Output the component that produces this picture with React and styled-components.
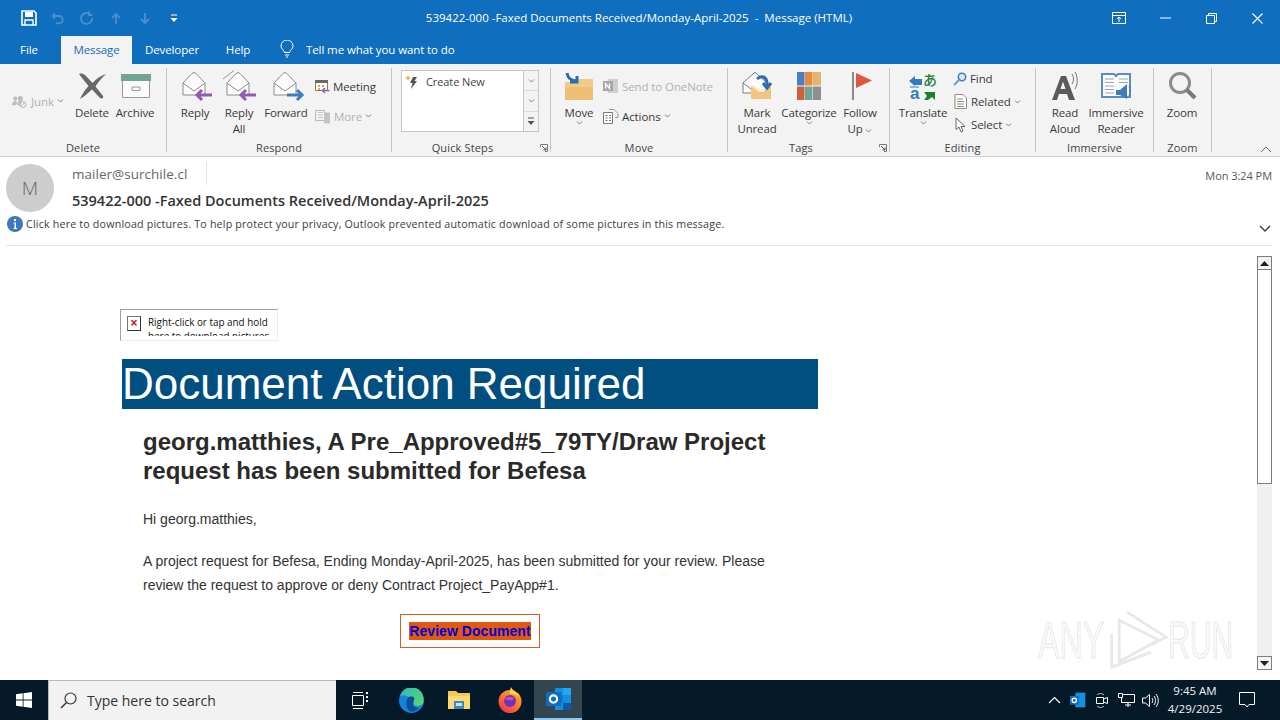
import React from "react";
import styled, { createGlobalStyle } from "styled-components";

const Global = createGlobalStyle`
  html, body { margin: 0; padding: 0; background: #fff; }
  * { box-sizing: border-box; }
`;

const ui = `"Open Sans", "Noto Sans", sans-serif`;

const Page = styled.div`
  position: relative;
  width: 1280px;
  height: 720px;
  overflow: hidden;
  display: flex;
  flex-direction: column;
  font-family: ${ui};
  background: #fff;
`;

const TitleBar = styled.div`
  height: 36px;
  background: #106ebe;
  display: flex;
  align-items: center;
  position: relative;
  color: #fff;
`;
const Quick = styled.div`
  display: flex;
  align-items: center;
  padding-left: 14px;
`;
const QuickSlot = styled.div`
  width: 29px;
  display: flex;
  justify-content: center;
`;
const Title = styled.div`
  position: absolute;
  left: 0;
  right: 0;
  top: 9px;
  text-align: center;
  font-size: 11.5px;
  line-height: 17px;
  color: #fff;
  white-space: pre;
  padding-right: 2px;
`;
const WinButtons = styled.div`
  margin-left: auto;
  display: flex;
  align-items: center;
`;
const WinSlot = styled.div`
  width: 46px;
  display: flex;
  justify-content: center;
`;

const TabBar = styled.div`
  height: 28px;
  background: #106ebe;
  display: flex;
  align-items: stretch;
  font-size: 11.5px;
  color: #fff;
`;
const Tab = styled.div`
  width: ${(p) => p.$w}px;
  padding-right: ${(p) => p.$right || 0}px;
  text-align: center;
  line-height: 27px;
  letter-spacing: -0.1px;
  color: ${(p) => (p.$active ? "#106ebe" : "#fff")};
  background: ${(p) => (p.$active ? "#f3f3f3" : "transparent")};
`;
const TellMe = styled.div`
  display: flex;
  align-items: center;
  gap: 12px;
  padding-left: 16px;
  letter-spacing: -0.1px;
  padding-bottom: 2px;
`;

const Ribbon = styled.div`
  position: relative;
  height: 93px;
  background: #f3f3f3;
  border-bottom: 1px solid #d2d2d2;
  display: flex;
`;
const Group = styled.div`
  width: ${(p) => p.$w}px;
  flex: none;
  position: relative;
  display: flex;
  flex-direction: column;
  &::after {
    content: "";
    position: absolute;
    right: 0;
    top: 4px;
    bottom: 4px;
    width: 1px;
    background: #c6c6c6;
  }
`;
const GroupBody = styled.div`
  height: 76px;
  display: flex;
  align-items: flex-start;
  padding-left: ${(p) => p.$pad || 0}px;
`;
const GroupLabel = styled.div`
  height: 16px;
  font-size: 11px;
  line-height: 16px;
  letter-spacing: 0.15px;
  text-align: center;
  color: #444;
  padding-right: ${(p) => p.$right || 1}px;
`;
const Launcher = styled.svg`
  position: absolute;
  right: 3px;
  bottom: 4px;
`;
const Big = styled.div`
  width: ${(p) => p.$w}px;
  flex: none;
  display: flex;
  flex-direction: column;
  align-items: center;
  padding-top: 4px;
  font-size: 11.5px;
  line-height: 16px;
  letter-spacing: -0.15px;
  color: #3a3a3a;
  text-align: center;
`;
const BigIcon = styled.div`
  height: 36px;
  width: 100%;
  margin-bottom: 1px;
  display: flex;
  align-items: center;
  justify-content: center;
`;
const SmallCol = styled.div`
  display: flex;
  flex-direction: column;
  flex: none;
  width: ${(p) => (p.$w ? `${p.$w}px` : "auto")};
  padding-top: ${(p) => p.$top}px;
  margin-left: ${(p) => p.$m || 0}px;
`;
const SmallRow = styled.div`
  height: ${(p) => p.$h}px;
  display: flex;
  align-items: center;
  gap: 3px;
  font-size: 11.5px;
  letter-spacing: -0.1px;
  white-space: nowrap;
  color: ${(p) => (p.$off ? "#b1b1b1" : "#3a3a3a")};
`;
const SmallIcon = styled.span`
  width: ${(p) => p.$w}px;
  display: flex;
  justify-content: center;
  flex: none;
`;
const Caret = styled.svg`
  flex: none;
`;
const StepsBox = styled.div`
  width: 138px;
  height: 62px;
  margin: 6px 0 0 9px;
  background: #fff;
  border: 1px solid #c6c6c6;
  display: flex;
`;
const StepsList = styled.div`
  flex: 1;
  padding: 3px 0 0 3px;
  display: flex;
  align-items: flex-start;
  gap: 7px;
  font-size: 11px;
  line-height: 16px;
  letter-spacing: -0.1px;
  color: #444;
`;
const StepsScroll = styled.div`
  width: 15px;
  border-left: 1px solid #c6c6c6;
  display: flex;
  flex-direction: column;
`;
const StepsArrow = styled.div`
  flex: 1;
  background: #f3f3f3;
  display: flex;
  align-items: center;
  justify-content: center;
  & + & { border-top: 1px solid #dcdcdc; }
`;
const Collapse = styled.svg`
  position: absolute;
  right: 8px;
  bottom: 3px;
`;

const Header = styled.div`
  height: 89px;
  position: relative;
  margin: 0 8px 0 6px;
  border-bottom: 1px solid #e3e3e3;
`;
const HeaderTop = styled.div`
  display: flex;
  padding-top: 7px;
  height: 59px;
`;
const Avatar = styled.div`
  width: 48px;
  height: 48px;
  border-radius: 50%;
  background: #cdcdcd;
  color: #666;
  font-size: 19px;
  font-weight: 300;
  display: flex;
  align-items: center;
  justify-content: center;
  flex: none;
`;
const Meta = styled.div`
  margin-left: 18px;
  flex: 1;
`;
const Sender = styled.div`
  display: block;
  height: 23px;
  width: 135px;
  margin-top: -2px;
  border-right: 1px solid #e3e3e3;
  font-size: 13.5px;
  line-height: 25px;
  letter-spacing: 0.03px;
  color: #666;
  white-space: nowrap;
`;
const Subject = styled.div`
  margin-top: 4px;
  font-size: 14.5px;
  line-height: 24px;
  font-weight: 600;
  color: #333;
`;
const Time = styled.div`
  font-size: 11px;
  line-height: 18px;
  color: #555;
  padding-top: 3px;
  white-space: nowrap;
  letter-spacing: -0.05px;
`;
const InfoBar = styled.div`
  display: flex;
  align-items: center;
  gap: 3px;
  height: 16px;
  padding-left: 1px;
  font-size: 10.7px;
  letter-spacing: 0.18px;
  color: #3c3c3c;
  white-space: nowrap;
`;
const Expand = styled.svg`
  position: absolute;
  right: 1px;
  top: 68px;
`;

const Body = styled.div`
  flex: 1;
  display: flex;
  min-height: 0;
`;
const Mail = styled.div`
  flex: 1;
  padding: 63px 0 0 120px;
  font-family: "Liberation Sans", Arial, sans-serif;
  color: #222;
`;
const Broken = styled.div`
  width: 158px;
  height: 32px;
  border: 1px solid #9f9f9f;
  border-right-color: #ececec;
  border-bottom-color: #ececec;
  display: flex;
  gap: 7px;
  padding: 5px 0 0 6px;
  font-family: ${ui};
  font-size: 9.9px;
  line-height: 14px;
  color: #111;
`;
const BrokenText = styled.div`
  height: 21px;
  overflow: hidden;
  white-space: pre-line;
`;
const BrokenIcon = styled.div`
  width: 14px;
  height: 15px;
  margin-top: 1px;
  flex: none;
  border: 1px solid #777;
  border-right-color: #333;
  border-bottom-color: #333;
  color: #c8102e;
  font: bold 12px/12px "Liberation Sans", sans-serif;
  text-align: center;
`;
const Banner = styled.div`
  width: 696px;
  height: 50px;
  margin: 18px 0 0 2px;
  background: #004f80;
  color: #fff;
  font-size: 44px;
  line-height: 50px;
  white-space: nowrap;
`;
const Inner = styled.div`
  width: 630px;
  margin-left: 23px;
`;
const Heading = styled.h1`
  margin: 18px 0 0;
  font-size: 24px;
  line-height: 29px;
  font-weight: bold;
  color: #2a2a2a;
`;
const Para = styled.p`
  margin: ${(p) => p.$top}px 0 0;
  font-size: 14px;
  line-height: 24px;
  color: #333;
`;
const ButtonRow = styled.div`
  margin-top: 17px;
  padding-left: 257px;
`;
const ReviewButton = styled.div`
  width: 140px;
  height: 34px;
  border: 1px solid #d0602a;
  display: flex;
  align-items: center;
  justify-content: center;
`;
const ReviewLink = styled.span`
  background: #e0590f;
  color: #0000d8;
  font-size: 14px;
  font-weight: bold;
  line-height: 18px;
  letter-spacing: 0.05px;
  white-space: nowrap;
`;

const Scroll = styled.div`
  width: 15px;
  margin: 10px 8px 10px 0;
  background: #f0f0f0;
  display: flex;
  flex-direction: column;
`;
const ScrollBtn = styled.div`
  height: 14px;
  background: #f4f4f4;
  border: 1px solid #7d7d7d;
  display: flex;
  align-items: center;
  justify-content: center;
`;
const ScrollThumb = styled.div`
  height: 214px;
  background: #fff;
  border: 1px solid #7d7d7d;
  border-top: none;
`;
const ScrollFill = styled.div`
  flex: 1;
`;

const Mark = styled.div`
  position: absolute;
  left: 1038px;
  top: 608px;
  width: 200px;
  height: 64px;
  display: flex;
  align-items: center;
  pointer-events: none;
  filter: blur(0.5px);
`;
const MarkWord = styled.span`
  font-family: "Liberation Sans", sans-serif;
  font-size: 52px;
  line-height: 64px;
  color: rgba(235, 235, 235, 0.3);
  -webkit-text-stroke: 1px #e6e6e6;
  display: inline-block;
  width: ${(p) => p.$w}px;
  transform: scaleX(${(p) => p.$sx});
  transform-origin: left center;
  white-space: nowrap;
`;

const Taskbar = styled.div`
  height: 40px;
  background: #051a29;
  display: flex;
  align-items: stretch;
  color: #fff;
`;
const StartBtn = styled.div`
  width: 48px;
  display: flex;
  align-items: center;
  justify-content: center;
`;
const SearchBox = styled.div`
  width: 288px;
  background: #f2f2f2;
  border: 1px solid #b9b9b9;
  border-bottom: none;
  border-right: none;
  display: flex;
  align-items: center;
  gap: 10px;
  padding-left: 11px;
  color: #333;
  font-size: 14px;
`;
const TaskIcon = styled.div`
  width: 48px;
  margin-left: ${(p) => p.$m || 0}px;
  display: flex;
  align-items: center;
  justify-content: center;
  background: ${(p) => (p.$active ? "#33454f" : "transparent")};
  border-bottom: ${(p) => (p.$active ? "2px solid #8fc7ef" : "none")};
`;
const Tray = styled.div`
  margin-left: auto;
  display: flex;
  align-items: center;
  padding-right: 14px;
`;
const TraySlot = styled.div`
  width: ${(p) => p.$w || 24}px;
  display: flex;
  align-items: center;
  justify-content: center;
`;
const Clock = styled.div`
  width: 66px;
  text-align: center;
  font-size: 11.5px;
  line-height: 18px;
  color: #f2f2f2;
  white-space: nowrap;
`;

/* ---- drawings ---- */

const Down = () => (
  <Caret width="7" height="4" viewBox="0 0 7 4">
    <path d="M1 .5l2.500 2.500L6 .5" fill="none" stroke="#808080" />
  </Caret>
);

const Corner = () => (
  <Launcher width="8" height="8" viewBox="0 0 8 8">
    <path d="M.5 3V.5H7.5V7.5H5" fill="none" stroke="#777" />
    <path d="M2 2l4 4M3.500 6H6V3.500" fill="none" stroke="#555" />
  </Launcher>
);

const Envelope = ({ arrow, forward, all }) => (
  <svg width="40" height="36" viewBox="0 0 40 36">
    {all && <path d="M4 11L15 2.500" fill="none" stroke="#9a9a9a" />}
    <path d="M8 15l9-9.500q2-2 4 0l9 9.500v12H8z" fill="#fbfbfb" stroke="#8c8c8c" />
    <path d="M8 15l11 8 11-8" fill="none" stroke="#8c8c8c" />
    {forward ? (
      <path d="M21 27h15M31 22l5 5-5 5" fill="none" stroke={arrow} strokeWidth="3" />
    ) : (
      <path d="M37 27H22M27 22l-5 5 5 5" fill="none" stroke={arrow} strokeWidth="3" />
    )}
  </svg>
);

const Icons = {
  save: (
    <svg width="16" height="16" viewBox="0 0 16 16">
      <path d="M1 1h12l2 2v12H1z" fill="none" stroke="#fff" strokeWidth="1.600" />
      <path d="M4 2h8v5H4z" fill="#fff" />
      <path d="M4 15v-5h8v5" fill="none" stroke="#fff" strokeWidth="1.400" />
    </svg>
  ),
  undo: (
    <svg width="14" height="14" viewBox="0 0 14 14">
      <path d="M4 2L1.500 5 4 8M2 5h6a3.600 3.600 0 010 7.400H5" fill="none" stroke="#4a90d0" strokeWidth="1.800" />
    </svg>
  ),
  redo: (
    <svg width="14" height="14" viewBox="0 0 14 14">
      <path d="M9 2.500A5.500 5.500 0 1012 7M9 .5v3.500h3.500" fill="none" stroke="#4a90d0" strokeWidth="1.800" />
    </svg>
  ),
  up: (
    <svg width="12" height="13" viewBox="0 0 12 13">
      <path d="M6 12V2M2 6l4-4 4 4" fill="none" stroke="#4a90d0" strokeWidth="1.800" />
    </svg>
  ),
  down: (
    <svg width="12" height="13" viewBox="0 0 12 13">
      <path d="M6 1v10M2 7l4 4 4-4" fill="none" stroke="#4a90d0" strokeWidth="1.800" />
    </svg>
  ),
  more: (
    <svg width="8" height="9" viewBox="0 0 8 9">
      <path d="M1 1h6" stroke="#fff" />
      <path d="M.5 4h7L4 8z" fill="#fff" />
    </svg>
  ),
  ribbonOpt: (
    <svg width="14" height="12" viewBox="0 0 14 12">
      <path d="M.5.500h13v11H.5zM.5 3.500h13" fill="none" stroke="#fff" />
      <path d="M7 10V5M5 7l2-2 2 2" fill="none" stroke="#fff" />
    </svg>
  ),
  min: (
    <svg width="11" height="2" viewBox="0 0 11 2">
      <path d="M0 1h11" stroke="#fff" />
    </svg>
  ),
  restore: (
    <svg width="11" height="11" viewBox="0 0 11 11">
      <path d="M.5 2.500h8v8h-8zM2.500 2.500V.5h8v8h-2" fill="none" stroke="#fff" />
    </svg>
  ),
  close: (
    <svg width="11" height="11" viewBox="0 0 11 11">
      <path d="M.5.500l10 10M10.500.5l-10 10" stroke="#fff" strokeWidth="1.100" />
    </svg>
  ),
  bulb: (
    <svg width="14" height="18" viewBox="0 0 14 18">
      <path d="M4.500 12.500C4 10 1 9 1 6a6 6 0 0112 0c0 3-3 4-3.500 6.500zM5 15h4M6 17h2" fill="none" stroke="#fff" />
    </svg>
  ),
  junk: (
    <svg width="20" height="17" viewBox="0 0 20 17">
      <circle cx="5" cy="5" r="2.500" fill="#bdbdbd" />
      <circle cx="11" cy="5" r="3" fill="#bdbdbd" />
      <path d="M1 13c0-3 2-5 4-5s2 1 2 2l-1 3zM7 12c0-3 2-4 4-4s3 1 3 2l-3 4z" fill="#bdbdbd" />
      <circle cx="14" cy="12" r="3.500" fill="#f3f3f3" stroke="#a8a8a8" />
      <path d="M12 14l4-4" stroke="#a8a8a8" />
    </svg>
  ),
  del: (
    <svg width="30" height="30" viewBox="0 0 30 30">
      <path d="M2 3c3-1 5 0 7 2l6.500 7C19 8 23 5 29 3c-4 4-8 8-10.500 12.500L26 25c1 2-1 3-3 2l-8-8.500C11 22 8 25 3 28c2-5 5-9 8.500-13C8 11 5 7 2 3z" fill="#686868" />
    </svg>
  ),
  archive: (
    <svg width="32" height="26" viewBox="0 0 32 26">
      <path d="M3.500 6.500h27v18h-27z" fill="#fbfbfb" stroke="#9a9a9a" />
      <path d="M2 1h30v7H2z" fill="#70a58f" />
      <path d="M13 14h8v3.500h-8z" fill="none" stroke="#9a9a9a" />
    </svg>
  ),
  meeting: (
    <svg width="15" height="15" viewBox="0 0 15 15">
      <path d="M.5 1.500h12v10H.5z" fill="#fff" stroke="#8a7a5a" />
      <path d="M0 1h13v3H0z" fill="#6a6a6a" />
      <path d="M3 6h2v2H3zM7 6h2v2H7zM3 9h2v2H3z" fill="#e2a53a" />
      <path d="M14.500 11.500H7.500M10 9l-2.500 2.500L10 14" fill="none" stroke="#8e5bb0" strokeWidth="1.500" />
    </svg>
  ),
  moreOff: (
    <svg width="16" height="15" viewBox="0 0 16 15">
      <path d="M.5 1.500h9v10h-9z" fill="none" stroke="#b8b8b8" />
      <path d="M3 3.500h5M3 6h5M3 8.500h5" stroke="#c8c8c8" />
      <path d="M9 3.500h6v11H9z" fill="#c4c4c4" />
    </svg>
  ),
  bolt: (
    <svg width="14" height="16" viewBox="0 0 14 16">
      <path d="M2 3l1-2 1 2 2 1-2 1-1 2-1-2-2-1z" fill="#e8b64a" />
      <path d="M8 3h4L9.500 7H12l-6 8 1.500-6H5z" fill="#555" />
    </svg>
  ),
  move: (
    <svg width="32" height="30" viewBox="0 0 32 30">
      <path d="M2 11h8l3-3h17v20H2z" fill="#f0cc88" />
      <path d="M2 16h28v13H2z" fill="#eec073" />
      <path d="M4 2c1 5 3 7 9 8M14 5v6H7" fill="none" stroke="#2a6db0" strokeWidth="3" />
    </svg>
  ),
  oneNote: (
    <svg width="16" height="16" viewBox="0 0 16 16">
      <path d="M5 1h10v14H5z" fill="#cfcfcf" />
      <path d="M0 3h10v10H0z" fill="#a6a6a6" />
      <path d="M2.500 10.500v-5l4 5v-5" fill="none" stroke="#fff" strokeWidth="1.300" />
    </svg>
  ),
  actions: (
    <svg width="16" height="15" viewBox="0 0 16 15">
      <path d="M.5 3.500h9v11h-9z" fill="#fff" stroke="#777" />
      <path d="M2.500 6.500h2M6 6.500h2M2.500 9h2M6 9h2M2.500 11.500h2M6 11.500h2" stroke="#777" />
      <path d="M6 .5h5l4 4v4h-3" fill="none" stroke="#999" />
    </svg>
  ),
  unread: (
    <svg width="36" height="34" viewBox="0 0 36 34">
      <path d="M4 14L15 4q1-1 2 0l11 10v10H4z" fill="#fbfbfb" stroke="#7a7a7a" />
      <path d="M4 14l8 6" fill="none" stroke="#7a7a7a" />
      <path d="M12 17l10 7 10-7v13H12z" fill="#efc581" />
      <path d="M12 16l10 6 10-6" fill="none" stroke="#f6dcae" />
      <path d="M18 10c4-4 10-3 10 5v3M24 14l4 5 4-5" fill="none" stroke="#2a6db0" strokeWidth="3" />
    </svg>
  ),
  categorize: (
    <svg width="24" height="28" viewBox="0 0 24 28">
      <path d="M0 0h7.500v13.500H0z" fill="#4a7fc1" />
      <path d="M8 0h7.500v13.500H8z" fill="#e8893c" />
      <path d="M16 0h8v13.500h-8z" fill="#e2b66f" />
      <path d="M0 14.500h7.500V28H0z" fill="#cf5f3f" />
      <path d="M8 14.500h7.500V28H8z" fill="#6fa796" />
      <path d="M16 14.500h8V28h-8z" fill="#8f8f8f" />
    </svg>
  ),
  flag: (
    <svg width="24" height="32" viewBox="0 0 24 32">
      <path d="M5 2v28" stroke="#8a8a8a" strokeWidth="2" />
      <path d="M8 3l16 7.500L8 18z" fill="#e0563f" />
    </svg>
  ),
  translate: (
    <svg width="34" height="32" viewBox="0 0 34 32">
      <path d="M3 11l6-5v3h7v6H9v1z" fill="#2a7cc4" />
      <text x="17" y="15" fontFamily="Noto Sans CJK JP, sans-serif" fontSize="14" fontWeight="500" fill="#1a7f36">あ</text>
      <path d="M4 17h9" stroke="#2a7cc4" />
      <text x="4" y="29" fontFamily="Liberation Sans, sans-serif" fontSize="17" fontWeight="bold" fill="#2a7cc4">a</text>
      <path d="M18 22h11v8l-3-3-4 3h-4l3-4z" fill="#1a7f36" />
    </svg>
  ),
  find: (
    <svg width="14" height="14" viewBox="0 0 14 14">
      <circle cx="9" cy="5" r="3.700" fill="#dbe8f5" stroke="#3f7cbd" strokeWidth="1.500" />
      <path d="M6 8l-5 5" stroke="#7a99bb" strokeWidth="2" />
    </svg>
  ),
  related: (
    <svg width="13" height="15" viewBox="0 0 13 15">
      <path d="M1 .5h8l3.500 3.500v10.500H1z" fill="#fff" stroke="#8a8a8a" />
      <path d="M3 5h6M3 7.500h7M3 10h7M3 12.500h7" stroke="#8a8a8a" />
      <path d="M0 1v13" stroke="#e2a53a" />
    </svg>
  ),
  select: (
    <svg width="11" height="16" viewBox="0 0 11 16">
      <path d="M1 1v11.500l3-2.500 2 5 2-1-2-4.500h4z" fill="#fff" stroke="#666" />
    </svg>
  ),
  read: (
    <svg width="32" height="30" viewBox="0 0 32 30">
      <path d="M3 29L12 5h5l9 24h-6l-2-6h-8l-2 6zM11.500 18h5L14 10.500z" fill="#5a5a5a" fillRule="evenodd" />
      <path d="M23 3c2 3 2 7 0 10M26 1c3 5 3 12 0 17" fill="none" stroke="#777" />
    </svg>
  ),
  immersive: (
    <svg width="34" height="30" viewBox="0 0 34 30">
      <path d="M3 3h12l2 2 2-2h12v23H3z" fill="#fbfbfb" stroke="#5a8cc4" strokeWidth="2" />
      <path d="M6 8h9M6 11.500h9M6 15h9M6 18.500h9M6 22h9M20 8h9M20 11.500h9" stroke="#98a8b8" />
      <path d="M17 24v-5h4l7-6v15l-7-4z" fill="#3f7cbd" />
      <path d="M30 15c1.500 3 1.500 7 0 10" fill="none" stroke="#3f7cbd" />
    </svg>
  ),
  zoom: (
    <svg width="30" height="30" viewBox="0 0 30 30">
      <circle cx="13" cy="12" r="9.500" fill="none" stroke="#8a8a8a" strokeWidth="3" />
      <path d="M20 19l8 8" stroke="#7a7a7a" strokeWidth="4" />
    </svg>
  ),
  info: (
    <svg width="16" height="16" viewBox="0 0 16 16">
      <circle cx="8" cy="8" r="8" fill="#3b78b8" />
      <path d="M7 3h2v2H7zM6.500 6.500H9V12h1v1H6.500v-1H7.500V7.500h-1z" fill="#fff" />
    </svg>
  ),
  win: (
    <svg width="16" height="16" viewBox="0 0 16 16">
      <path d="M0 2.200l6.700-.9v6.300H0zM7.500 1.200L16 0v7.600H7.500zM0 8.400h6.700v6.300L0 13.800zM7.500 8.400H16V16l-8.500-1.200z" fill="#fff" />
    </svg>
  ),
  search: (
    <svg width="17" height="17" viewBox="0 0 17 17">
      <circle cx="10.500" cy="6.500" r="5.500" fill="none" stroke="#333" strokeWidth="1.200" />
      <path d="M6.500 10.500L1 16" stroke="#333" strokeWidth="1.400" />
    </svg>
  ),
  taskView: (
    <svg width="16" height="17" viewBox="0 0 16 17">
      <path d="M1 .5h10M1 16.500h10" stroke="#fff" />
      <path d="M.5 3.500h11v10H.5z" fill="none" stroke="#fff" />
      <path d="M14 0h2v2h-2zM14 4h2v2h-2zM14 8h2v2h-2z" fill="#fff" />
    </svg>
  ),
  edge: (
    <svg width="25" height="25" viewBox="0 0 25 25">
      <defs>
        <linearGradient id="edgeA" x1="0" y1="0" x2="1" y2="1">
          <stop offset="0" stopColor="#2fb6c0" />
          <stop offset="1" stopColor="#5fd860" />
        </linearGradient>
      </defs>
      <circle cx="12.500" cy="12.500" r="12.500" fill="#1583d8" />
      <path d="M1 8a12 12 0 0123.500 4.500c0 4-3 5.500-6.500 5.500-3 0-3.500-2-3-4.500C12 9 5 6 1 8z" fill="url(#edgeA)" />
      <path d="M7.500 14c0-4 3-6 6-5.500 2 .5 2.500 3 1 4.500-2 3 0 7 5 7-2 3-5 4-8 3.500C8 21.500 7 17 7.500 14z" fill="#0c4f96" />
    </svg>
  ),
  folder: (
    <svg width="22" height="18" viewBox="0 0 22 18">
      <path d="M0 0h8l2 2h12v16H0z" fill="#f5c94f" />
      <path d="M0 5h22v13H0z" fill="#fbdc74" />
      <path d="M6 10h10v8H6z" fill="#3f88c5" />
      <path d="M8 12h6v3H8z" fill="#cfe3f2" />
    </svg>
  ),
  firefox: (
    <svg width="24" height="26" viewBox="0 0 24 26">
      <defs>
        <linearGradient id="foxA" x1="0.800" y1="0" x2="0.100" y2="1">
          <stop offset="0" stopColor="#ffb02e" />
          <stop offset="0.550" stopColor="#ff6a2b" />
          <stop offset="1" stopColor="#e8295f" />
        </linearGradient>
      </defs>
      <circle cx="12" cy="14.500" r="11.500" fill="url(#foxA)" />
      <path d="M13 0c1 3 6 5 9 10-3-2-6-3-9-3-2 0-1-4 0-7z" fill="#ffd23a" />
      <circle cx="12" cy="14" r="6" fill="#6a35c0" />
      <path d="M6 12c3-2 7-3 10-1-1 2-3 3-5 2z" fill="#d94f9f" />
    </svg>
  ),
  outlook: (
    <svg width="25" height="22" viewBox="0 0 25 22">
      <path d="M9 0h16v22H9z" fill="#1490df" />
      <path d="M17 0h8v7h-8z" fill="#28a8ea" />
      <path d="M9 7h8v8H9z" fill="#0f78d4" />
      <path d="M17 15h8v7h-8z" fill="#0a5aa8" />
      <path d="M0 4h15v14H0z" fill="#0f6cbd" />
      <circle cx="7.500" cy="11" r="3.600" fill="none" stroke="#fff" strokeWidth="2.200" />
    </svg>
  ),
  trayUp: (
    <svg width="13" height="8" viewBox="0 0 13 8">
      <path d="M1 7l5.500-5.500L12 7" fill="none" stroke="#fff" strokeWidth="1.200" />
    </svg>
  ),
  trayOutlook: (
    <svg width="16" height="16" viewBox="0 0 24 24">
      <path d="M8 1h15v22H8z" fill="#1490df" />
      <path d="M0 6h13v13H0z" fill="#0f6cbd" />
      <circle cx="6.500" cy="12.500" r="3.300" fill="none" stroke="#fff" strokeWidth="2" />
    </svg>
  ),
  cam: (
    <svg width="14" height="16" viewBox="0 0 14 16">
      <path d="M1.500 5.500h7v6h-7zM8.500 7l4-1.500v6l-4-1.500" fill="none" stroke="#fff" />
      <path d="M2 3c2-2 5-2 7 0M2 14c2 2 5 2 7 0" fill="none" stroke="#cfcfcf" />
    </svg>
  ),
  net: (
    <svg width="17" height="15" viewBox="0 0 17 15">
      <path d="M3.500 1.500h13v8h-13z" fill="none" stroke="#fff" />
      <path d="M.5.500h4v4h-4z" fill="#051a29" stroke="#fff" />
      <path d="M7 12h6M10 9.500V14" stroke="#fff" />
    </svg>
  ),
  vol: (
    <svg width="17" height="15" viewBox="0 0 17 15">
      <path d="M.5 5h3L7.500 1.500v12L3.500 10h-3z" fill="none" stroke="#fff" />
      <path d="M10 5c1 1.500 1 3.500 0 5M12 3c2 2.500 2 6.500 0 9M14 1c3 4 3 9 0 13" fill="none" stroke="#fff" />
    </svg>
  ),
  notif: (
    <svg width="16" height="16" viewBox="0 0 16 16">
      <path d="M.5.500h15v12H10l-2 2.500-2-2.500H.5z" fill="none" stroke="#fff" />
    </svg>
  ),
};

const Triangle = () => (
  <svg width="60" height="66" viewBox="0 0 64 66" style={{ flex: "none" }}>
    <path d="M12 12L54 33 12 56zM20 3L62 30 46 38M4 26V62L46 46" fill="none" stroke="#e8e8e8" strokeWidth="3" />
  </svg>
);

const quickIcons = ["save", "undo", "redo", "up", "down", "more"];
const winIcons = ["ribbonOpt", "min", "restore", "close"];
const trayIcons = ["trayUp", "trayOutlook", "cam", "net", "vol"];

function App() {
  return (
    <Page>
      <Global />
      <TitleBar>
        <Quick>
          {quickIcons.map((n) => (
            <QuickSlot key={n}>{Icons[n]}</QuickSlot>
          ))}
        </Quick>
        <Title>539422-000 -Faxed Documents Received/Monday-April-2025  -  Message (HTML)</Title>
        <WinButtons>
          {winIcons.map((n) => (
            <WinSlot key={n}>{Icons[n]}</WinSlot>
          ))}
        </WinButtons>
      </TitleBar>

      <TabBar>
        <Tab $w={61} $right={3}>File</Tab>
        <Tab $w={71} $active>Message</Tab>
        <Tab $w={80}>Developer</Tab>
        <Tab $w={52}>Help</Tab>
        <TellMe>
          {Icons.bulb}
          <span>Tell me what you want to do</span>
        </TellMe>
      </TabBar>

      <Ribbon>
        <Group $w={167}>
          <GroupBody $pad={11}>
            <SmallCol $top={25} $w={60}>
              <SmallRow $h={24} $off>
                <SmallIcon $w={17}>{Icons.junk}</SmallIcon>
                Junk <Down />
              </SmallRow>
            </SmallCol>
            <Big $w={42}>
              <BigIcon>{Icons.del}</BigIcon>
              Delete
            </Big>
            <Big $w={44}>
              <BigIcon>{Icons.archive}</BigIcon>
              Archive
            </Big>
          </GroupBody>
          <GroupLabel>Delete</GroupLabel>
        </Group>

        <Group $w={225}>
          <GroupBody $pad={6}>
            <Big $w={44}>
              <BigIcon><Envelope arrow="#8e5bb0" /></BigIcon>
              Reply
            </Big>
            <Big $w={44}>
              <BigIcon><Envelope arrow="#8e5bb0" all /></BigIcon>
              Reply<br />All
            </Big>
            <Big $w={50}>
              <BigIcon><Envelope arrow="#3f7cbd" forward /></BigIcon>
              Forward
            </Big>
            <SmallCol $top={7} $m={4}>
              <SmallRow $h={30}>{Icons.meeting} Meeting</SmallRow>
              <SmallRow $h={30} $off>{Icons.moreOff} More <Down /></SmallRow>
            </SmallCol>
          </GroupBody>
          <GroupLabel>Respond</GroupLabel>
        </Group>

        <Group $w={159}>
          <GroupBody>
            <StepsBox>
              <StepsList>
                {Icons.bolt}
                <span>Create New</span>
              </StepsList>
              <StepsScroll>
                <StepsArrow><Down /></StepsArrow>
                <StepsArrow><Down /></StepsArrow>
                <StepsArrow>
                  <svg width="8" height="9" viewBox="0 0 8 9">
                    <path d="M1 1h6" stroke="#555" />
                    <path d="M.5 4h7L4 8z" fill="#555" />
                  </svg>
                </StepsArrow>
              </StepsScroll>
            </StepsBox>
          </GroupBody>
          <GroupLabel $right={18}>Quick Steps</GroupLabel>
          <Corner />
        </Group>

        <Group $w={177}>
          <GroupBody $pad={6}>
            <Big $w={44}>
              <BigIcon>{Icons.move}</BigIcon>
              Move
              <Down />
            </Big>
            <SmallCol $top={7} $m={2}>
              <SmallRow $h={30} $off>{Icons.oneNote} Send to OneNote</SmallRow>
              <SmallRow $h={30}>{Icons.actions} Actions <Down /></SmallRow>
            </SmallCol>
          </GroupBody>
          <GroupLabel>Move</GroupLabel>
        </Group>

        <Group $w={162}>
          <GroupBody $pad={4}>
            <Big $w={50}>
              <BigIcon>{Icons.unread}</BigIcon>
              Mark<br />Unread
            </Big>
            <Big $w={54}>
              <BigIcon>{Icons.categorize}</BigIcon>
              Categorize
              <Down />
            </Big>
            <Big $w={48}>
              <BigIcon>{Icons.flag}</BigIcon>
              Follow<br />
              <span>Up <Down /></span>
            </Big>
          </GroupBody>
          <GroupLabel $right={16}>Tags</GroupLabel>
          <Corner />
        </Group>

        <Group $w={146}>
          <GroupBody $pad={8}>
            <Big $w={50}>
              <BigIcon>{Icons.translate}</BigIcon>
              Translate
              <Down />
            </Big>
            <SmallCol $top={3} $m={5}>
              <SmallRow $h={23}>{Icons.find} Find</SmallRow>
              <SmallRow $h={23}><SmallIcon $w={15}>{Icons.related}</SmallIcon> Related <Down /></SmallRow>
              <SmallRow $h={23}><SmallIcon $w={15}>{Icons.select}</SmallIcon> Select <Down /></SmallRow>
            </SmallCol>
          </GroupBody>
          <GroupLabel>Editing</GroupLabel>
        </Group>

        <Group $w={118}>
          <GroupBody $pad={6}>
            <Big $w={46}>
              <BigIcon>{Icons.read}</BigIcon>
              Read<br />Aloud
            </Big>
            <Big $w={56}>
              <BigIcon>{Icons.immersive}</BigIcon>
              Immersive<br />Reader
            </Big>
          </GroupBody>
          <GroupLabel>Immersive</GroupLabel>
        </Group>

        <Group $w={58}>
          <GroupBody $pad={5}>
            <Big $w={46}>
              <BigIcon>{Icons.zoom}</BigIcon>
              Zoom
            </Big>
          </GroupBody>
          <GroupLabel>Zoom</GroupLabel>
        </Group>

        <Collapse width="12" height="7" viewBox="0 0 12 7">
          <path d="M1 6l5-5 5 5" fill="none" stroke="#666" />
        </Collapse>
      </Ribbon>

      <Header>
        <HeaderTop>
          <Avatar>M</Avatar>
          <Meta>
            <Sender>mailer@surchile.cl</Sender>
            <Subject>539422-000 -Faxed Documents Received/Monday-April-2025</Subject>
          </Meta>
          <Time>Mon 3:24 PM</Time>
        </HeaderTop>
        <InfoBar>
          {Icons.info}
          <span>Click here to download pictures. To help protect your privacy, Outlook prevented automatic download of some pictures in this message.</span>
        </InfoBar>
        <Expand width="12" height="8" viewBox="0 0 12 8">
          <path d="M1 1l5 5 5-5" fill="none" stroke="#444" strokeWidth="1.500" />
        </Expand>
      </Header>

      <Body>
        <Mail>
          <Broken>
            <BrokenIcon>×</BrokenIcon>
            <BrokenText>Right-click or tap and hold{"\n"}here to download pictures</BrokenText>
          </Broken>
          <Banner>Document Action Required</Banner>
          <Inner>
            <Heading>georg.matthies, A Pre_Approved#5_79TY/Draw Project request has been submitted for Befesa</Heading>
            <Para $top={22}>Hi georg.matthies,</Para>
            <Para $top={18}>
              A project request for Befesa, Ending Monday-April-2025, has been submitted for your review. Please review the request to approve or deny Contract Project_PayApp#1.
            </Para>
            <ButtonRow>
              <ReviewButton>
                <ReviewLink>Review Document</ReviewLink>
              </ReviewButton>
            </ButtonRow>
          </Inner>
        </Mail>
        <Scroll>
          <ScrollBtn>
            <svg width="9" height="5" viewBox="0 0 9 5"><path d="M4.500 0L9 5H0z" fill="#222" /></svg>
          </ScrollBtn>
          <ScrollThumb />
          <ScrollFill />
          <ScrollBtn>
            <svg width="9" height="5" viewBox="0 0 9 5"><path d="M4.500 5L9 0H0z" fill="#222" /></svg>
          </ScrollBtn>
        </Scroll>
      </Body>

      <Mark>
        <MarkWord $w={70} $sx={0.62}>ANY</MarkWord>
        <Triangle />
        <MarkWord $w={68} $sx={0.58}>RUN</MarkWord>
      </Mark>

      <Taskbar>
        <StartBtn>{Icons.win}</StartBtn>
        <SearchBox>
          {Icons.search}
          <span>Type here to search</span>
        </SearchBox>
        <TaskIcon>{Icons.taskView}</TaskIcon>
        <TaskIcon $m={3}>{Icons.edge}</TaskIcon>
        <TaskIcon>{Icons.folder}</TaskIcon>
        <TaskIcon $m={3}>{Icons.firefox}</TaskIcon>
        <TaskIcon $active>{Icons.outlook}</TaskIcon>
        <Tray>
          {trayIcons.map((n) => (
            <TraySlot key={n}>{Icons[n]}</TraySlot>
          ))}
          <Clock>
            9:45 AM<br />4/29/2025
          </Clock>
          <TraySlot $w={38}>{Icons.notif}</TraySlot>
        </Tray>
      </Taskbar>
    </Page>
  );
}

export default App;
